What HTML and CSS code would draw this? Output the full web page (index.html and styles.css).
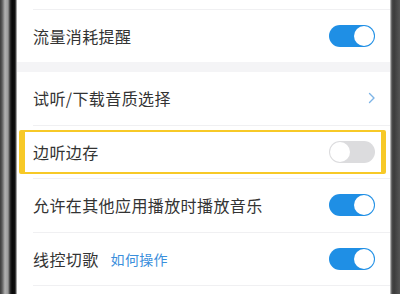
FILE: index.html
```html
<!DOCTYPE html>
<html lang="zh">
<head>
<meta charset="utf-8">
<link rel="stylesheet" href="styles.css">
</head>
<body>
<div class="phone">
  <div class="frame-left"></div>
  <div class="screen">
    <div class="top-strip"></div>
    <div class="row row-first">
      <span class="label">流量消耗提醒</span>
      <span class="toggle on"><span class="knob"></span></span>
    </div>
    <div class="section-gap"></div>
    <div class="row">
      <span class="label">试听/下载音质选择</span>
      <svg class="chevron" width="8" height="12" viewBox="0 0 8 12"><path d="M1.5 1.5 L6 6 L1.5 10.5" fill="none" stroke="#7db4e6" stroke-width="1.4" stroke-linecap="round" stroke-linejoin="round"/></svg>
    </div>
    <div class="row">
      <span class="label">边听边存</span>
      <span class="toggle off"><span class="knob"></span></span>
    </div>
    <div class="row">
      <span class="label">允许在其他应用播放时播放音乐</span>
      <span class="toggle on"><span class="knob"></span></span>
    </div>
    <div class="row">
      <span class="label">线控切歌<span class="link">如何操作</span></span>
      <span class="toggle on"><span class="knob"></span></span>
    </div>
  </div>
  <div class="frame-right"></div>
  <div class="highlight"></div>
</div>
</body>
</html>
```

FILE: styles.css
```css
html, body {
  margin: 0;
  padding: 0;
  background: #fff;
}
body {
  width: 400px;
  height: 294px;
  overflow: hidden;
  font-family: "Noto Sans CJK SC", "Noto Sans", sans-serif;
}
.phone {
  position: relative;
  display: flex;
  width: 400px;
  height: 294px;
}
.frame-left {
  width: 17px;
  flex: none;
  background: linear-gradient(to right, #3a3a3a 0, #5a5a5a 2px, #b0b0b0 5px, #9a9a9a 8px, #333 10px, #080808 12px, #101010 15px, #666 16px, #ddd 17px);
}
.frame-right {
  width: 10px;
  flex: none;
  background: linear-gradient(to right, #d8d8d8 0, #8a8a8a 1px, #4a4a4a 2px, #3c3c3c 4px, #555 10px);
}
.screen {
  flex: 1;
  background: #fff;
  display: flex;
  flex-direction: column;
}
.top-strip {
  height: 9px;
  margin-left: 16px;
  border-bottom: 1px solid #f0f0f2;
  flex: none;
}
.row {
  flex: none;
  height: 52.5px;
  margin-left: 16px;
  padding-right: 15px;
  display: flex;
  align-items: center;
  justify-content: space-between;
  border-bottom: 1px solid #f0f0f2;
}
.row-first {
  height: 52px;
  border-bottom: none;
}
.section-gap {
  flex: none;
  height: 10px;
  background: #f4f4f6;
}
.label {
  font-size: 16px;
  color: #333;
  letter-spacing: 0.4px;
  display: flex;
  align-items: center;
}
.link {
  font-size: 14px;
  color: #3b8fdc;
  margin-left: 12px;
  letter-spacing: 0.3px;
}
.toggle {
  position: relative;
  width: 46px;
  height: 22px;
  border-radius: 11px;
  box-sizing: border-box;
  flex: none;
}
.toggle.on {
  background: #1f8fe5;
}
.toggle.off {
  background: #dcdcde;
}
.knob {
  position: absolute;
  top: 1px;
  width: 20px;
  height: 20px;
  border-radius: 50%;
  background: #fff;
}
.toggle.on .knob {
  right: 1px;
}
.toggle.off .knob {
  left: 1px;
}
.chevron {
  margin-right: -1px;
}
.highlight {
  position: absolute;
  left: 19px;
  top: 130px;
  width: 367px;
  height: 44px;
  box-sizing: border-box;
  border-style: solid;
  border-color: #f7c927;
  border-width: 2px 5px 2px 6px;
  border-radius: 2px;
  pointer-events: none;
}
```
